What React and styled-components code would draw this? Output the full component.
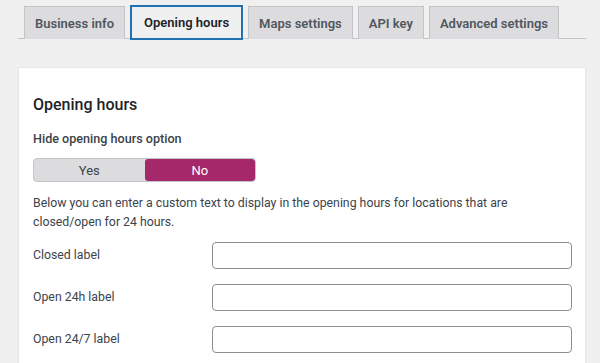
import React from 'react'
import styled, { createGlobalStyle } from 'styled-components'

const GlobalStyle = createGlobalStyle`
  body {
    margin: 0;
    background: #f0f0f1;
    font-family: Roboto, "Open Sans", sans-serif;
    color: #3c434a;
  }
`

const Page = styled.div`
  padding: 5px 14px 0 18px;
`

const TabBar = styled.nav`
  display: flex;
  gap: 5px;
  padding-left: 6px;
  border-bottom: 1px solid #c3c4c7;
  height: 33px;
`

const Tab = styled.div`
  box-sizing: border-box;
  flex-shrink: 0;
  white-space: nowrap;
  height: ${p => (p.active ? '35px' : '33px')};
  margin-top: ${p => (p.active ? '0' : '1px')};
  padding: 0 ${p => (p.active ? '12px' : '10px')};
  display: flex;
  align-items: center;
  font-size: 13px;
  font-weight: 600;
  color: ${p => (p.active ? '#1d2327' : '#50575e')};
  background: ${p => (p.active ? '#f0f0f1' : '#dcdcde')};
  border: ${p => (p.active ? '2px solid #2271b1' : '1px solid #c3c4c7')};
  border-bottom: ${p => (p.active ? '2px solid #2271b1' : 'none')};
`

const Card = styled.section`
  margin-top: 28px;
  background: #fff;
  border: 1px solid #e6e6e7;
  box-shadow: 0 1px 2px rgba(0, 0, 0, 0.04);
  padding: 27px 14px 20px;
  height: 300px;
`

const Heading = styled.h2`
  margin: 0 0 16px;
  font-size: 16px;
  font-weight: 500;
  color: #1d2327;
  line-height: 20px;
`

const OptionTitle = styled.div`
  font-size: 12.6px;
  font-weight: 500;
  color: #3c434a;
  margin-bottom: 12px;
`

const Toggle = styled.div`
  display: flex;
  width: 223px;
  height: 24px;
  box-sizing: border-box;
  border: 1px solid #c3c4c7;
  border-radius: 4px;
  background: #dcdcde;
  overflow: hidden;
  margin-bottom: 12px;
`

const ToggleOption = styled.div`
  flex: 1;
  display: flex;
  align-items: center;
  justify-content: center;
  font-size: 13px;
  border-radius: 3px;
  color: ${p => (p.selected ? '#fff' : '#3c434a')};
  background: ${p => (p.selected ? '#a4286a' : 'transparent')};
`

const Intro = styled.p`
  margin: 0 0 2px;
  font-size: 12.3px;
  line-height: 19px;
  max-width: 520px;
`

const FieldRow = styled.div`
  display: grid;
  grid-template-columns: 179px 360px;
  align-items: center;
  height: 42px;
`

const Label = styled.label`
  font-size: 12.3px;
  color: #3c434a;
`

const Input = styled.input`
  box-sizing: border-box;
  height: 27px;
  width: 100%;
  border: 1px solid #8c8f94;
  border-radius: 4px;
  background: #fff;
`

export default function App () {
  const tabs = ['Business info', 'Opening hours', 'Maps settings', 'API key', 'Advanced settings']
  const fields = ['Closed label', 'Open 24h label', 'Open 24/7 label']
  return (
    <>
      <GlobalStyle />
      <Page>
        <TabBar>
          {tabs.map(t => <Tab key={t} active={t === 'Opening hours'}>{t}</Tab>)}
        </TabBar>
        <Card>
          <Heading>Opening hours</Heading>
          <OptionTitle>Hide opening hours option</OptionTitle>
          <Toggle>
            <ToggleOption>Yes</ToggleOption>
            <ToggleOption selected>No</ToggleOption>
          </Toggle>
          <Intro>Below you can enter a custom text to display in the opening hours for locations that are closed/open for 24 hours.</Intro>
          {fields.map(f => (
            <FieldRow key={f}>
              <Label>{f}</Label>
              <Input type="text" />
            </FieldRow>
          ))}
        </Card>
      </Page>
    </>
  )
}
